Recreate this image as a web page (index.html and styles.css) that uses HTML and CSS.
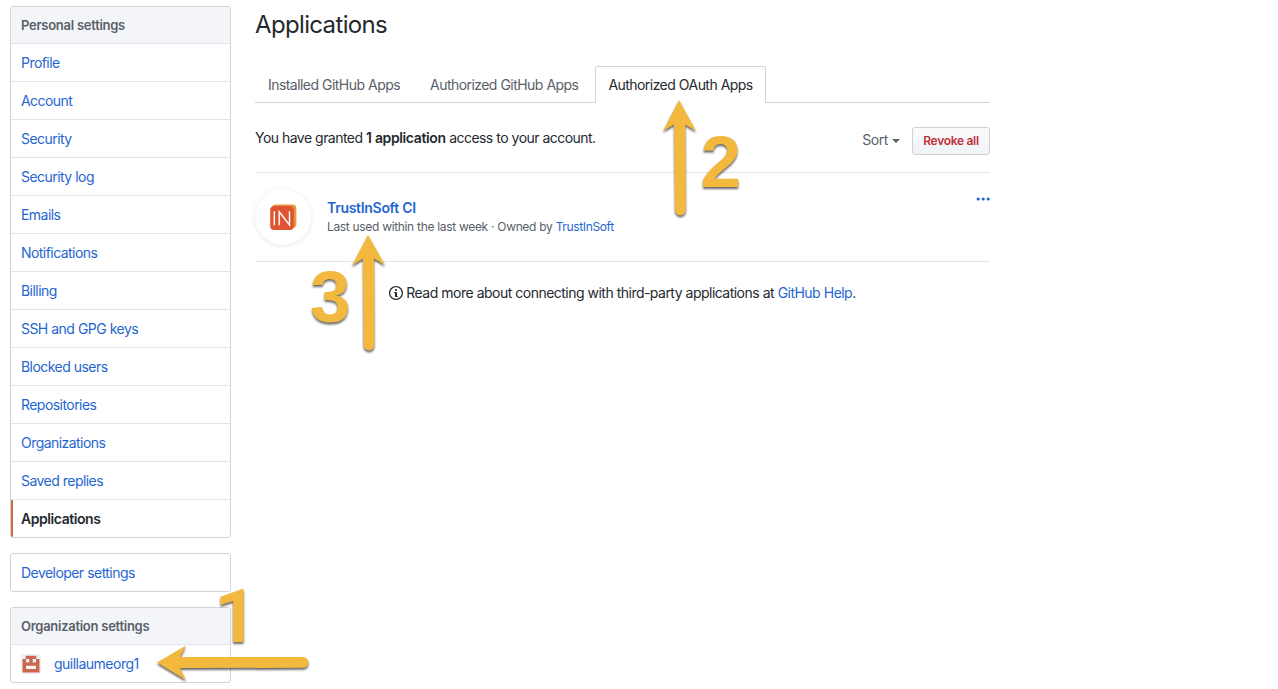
FILE: index.html
```html
<!DOCTYPE html>
<html lang="en">
<head>
<meta charset="utf-8">
<title>Applications</title>
<link rel="stylesheet" href="styles.css">
</head>
<body>
<div class="page">
  <aside class="sidebar">
    <nav class="menu">
      <h2 class="menu-heading">Personal settings</h2>
      <a class="menu-item">Profile</a>
      <a class="menu-item">Account</a>
      <a class="menu-item">Security</a>
      <a class="menu-item">Security log</a>
      <a class="menu-item">Emails</a>
      <a class="menu-item">Notifications</a>
      <a class="menu-item">Billing</a>
      <a class="menu-item">SSH and GPG keys</a>
      <a class="menu-item">Blocked users</a>
      <a class="menu-item">Repositories</a>
      <a class="menu-item">Organizations</a>
      <a class="menu-item">Saved replies</a>
      <a class="menu-item selected">Applications</a>
    </nav>
    <nav class="menu">
      <a class="menu-item">Developer settings</a>
    </nav>
    <nav class="menu">
      <h2 class="menu-heading org-heading">Organization settings</h2>
      <a class="menu-item org">
        <svg class="avatar" width="20" height="20" viewBox="0 0 20 20">
          <rect width="20" height="20" rx="3" fill="#f0f0f0"/>
          <path fill="#cb6751" fill-rule="evenodd" d="M4.700 1.700h10.600v3.200h3.200v13.600h-17V4.900h3.200zM5 5v3.400h3.300V5zM11.700 5v3.400H15V5zM5 11.700V15h10v-3.300z"/>
        </svg>
        <span>guillaumeorg1</span>
      </a>
    </nav>
  </aside>
  <main class="content">
    <h1 class="title">Applications</h1>
    <div class="tabs">
      <a class="tab">Installed GitHub Apps</a>
      <a class="tab">Authorized GitHub Apps</a>
      <a class="tab active">Authorized OAuth Apps</a>
    </div>
    <div class="toolbar">
      <p class="granted">You have granted <strong>1 application</strong> access to your account.</p>
      <div class="actions">
        <span class="sort">Sort<i class="caret"></i></span>
        <button class="revoke">Revoke all</button>
      </div>
    </div>
    <div class="app-row">
      <div class="app-logo">
        <svg width="56" height="56" viewBox="0 0 56 56">
          <rect x="17" y="15.500" width="24.400" height="23.500" rx="4" fill="#e9963c"/>
          <rect x="15.200" y="17" width="23.600" height="24" rx="4" fill="#df5534"/>
          <path d="M19.300 22.300v14M24.200 36.300V22.700l10.300 13.200V22.300" fill="none" stroke="#fff" stroke-width="1.400"/>
        </svg>
      </div>
      <div class="app-info">
        <a class="app-name">TrustInSoft CI</a>
        <p class="app-meta">Last used within the last week · Owned by <a>TrustInSoft</a></p>
      </div>
      <svg class="kebab" width="14" height="4" viewBox="0 0 14 4" fill="#1f66d0">
        <circle cx="2.200" cy="2" r="1.600"/><circle cx="7.200" cy="2" r="1.600"/><circle cx="12.200" cy="2" r="1.600"/>
      </svg>
    </div>
    <p class="help">
      <svg width="14" height="16" viewBox="0 0 14 16"><path fill="#24292e" fill-rule="evenodd" d="M6.300 5.690a.942.942 0 0 1-.28-.7c0-.28.09-.52.28-.7.19-.18.42-.28.7-.28.28 0 .52.09.7.28.18.19.28.42.28.7 0 .28-.09.52-.28.7a1 1 0 0 1-.7.3c-.28 0-.52-.11-.7-.3zM8 7.990c-.02-.25-.11-.48-.31-.69-.2-.19-.42-.3-.69-.31H6c-.27.02-.48.13-.69.31-.2.2-.3.44-.31.69h1v3c.02.27.11.5.31.69.2.2.42.31.69.31h1c.27 0 .48-.11.69-.31.2-.19.3-.42.31-.69H8V7.980v.01zM7 2.300c-3.140 0-5.700 2.540-5.700 5.680 0 3.140 2.560 5.700 5.700 5.700s5.700-2.550 5.700-5.700c0-3.150-2.560-5.690-5.700-5.690v.01zM7 .98c3.860 0 7 3.140 7 7s-3.140 7-7 7-7-3.120-7-7 3.140-7 7-7z"/></svg>
      <span>Read more about connecting with third-party applications at <a>GitHub Help</a>.</span>
    </p>
  </main>
  <svg class="annotations" width="1278" height="689" viewBox="0 0 1278 689">
    <path d="M679 100 L696 131 L685.300 124.500 L685.800 210 A5.400 5.400 0 0 1 675 210 L674 124.500 L663 131 Z"/>
    <path d="M368 235 L385 265 L374 258.500 L374.400 345 A5.400 5.400 0 0 1 363.600 345 L363 258.500 L352 265.500 Z"/>
    <path d="M157 662.500 L186 645.500 L180 657 L303 657 A5.400 5.400 0 0 1 303 667.800 L180 668 L186 680 Z"/>
    <text class="one" x="214.500" y="642">1</text>
    <text x="700.500" y="187">2</text>
    <text x="310" y="322">3</text>
  </svg>
</div>
</body>
</html>
```
FILE: styles.css
```css
* { box-sizing: border-box; }
body {
  margin: 0;
  background: #fff;
  color: #24292e;
  font: 14px/21px Inter, "Liberation Sans", sans-serif;
  letter-spacing: -0.55px;
  word-spacing: 0.2px;
}
h1, h2, p { margin: 0; }
a { color: #1f66d0; }
.page {
  position: relative;
  display: flex;
  gap: 24px;
  height: 689px;
  padding: 6px 0 0 10px;
  overflow: hidden;
}
.sidebar {
  display: flex;
  flex-direction: column;
  gap: 15px;
  width: 221px;
}
.menu {
  border: 1px solid #d1d5da;
  border-radius: 3px;
  overflow: hidden;
}
.menu-heading {
  height: 37px;
  padding: 0 10px;
  border-bottom: 1px solid #e1e4e8;
  background: #f3f5f9;
  color: #586069;
  font-size: 13px;
  font-weight: 600;
  line-height: 37px;
  letter-spacing: -0.28px;
}
.menu-item {
  display: flex;
  align-items: center;
  height: 38px;
  padding: 0 10px;
  border-bottom: 1px solid #e1e4e8;
}
.menu-item:last-child { height: 37px; border-bottom: 0; }
.selected {
  padding-left: 8px;
  border-left: 2px solid #d26b32;
  color: #24292e;
  font-weight: 600;
  letter-spacing: -0.44px;
}
.org { gap: 13px; letter-spacing: -0.51px; }
.content { width: 735px; }
.title {
  height: 60px;
  font-size: 24px;
  font-weight: 400;
  line-height: 38px;
  letter-spacing: -0.65px;
}
.tabs {
  display: flex;
  height: 37px;
  border-bottom: 1px solid #d1d5da;
}
.tab {
  height: 37px;
  padding: 7px 12px;
  border: 1px solid transparent;
  border-bottom: 0;
  color: #586069;
  white-space: nowrap;
}
.tab + .tab { margin-left: 4px; }
.active {
  border-color: #d1d5da;
  border-radius: 3px 3px 0 0;
  background: #fff;
  color: #24292e;
}
.toolbar {
  display: flex;
  justify-content: space-between;
  height: 70px;
  padding-top: 24px;
  border-bottom: 1px solid #e1e4e8;
}
strong { font-weight: 600; letter-spacing: -0.38px; }
.granted { line-height: 22px; }
.actions { display: flex; gap: 12px; height: 28px; align-items: center; }
.sort { display: flex; align-items: center; gap: 4px; height: 24px; margin-bottom: 3px; color: #586069; letter-spacing: -0.4px; }
.caret {
  width: 0;
  height: 0;
  margin-top: 3px;
  border: 4px solid transparent;
  border-top-color: #586069;
  border-bottom: 0;
}
.revoke {
  width: 78px;
  height: 28px;
  padding: 0;
  border: 1px solid #cdd0d4;
  border-radius: 3px;
  background: linear-gradient(#fafbfc, #eff3f6);
  color: #be3039;
  font: 600 12px/18px Inter, sans-serif;
  letter-spacing: -0.3px;
}
.app-row {
  display: flex;
  height: 89px;
  padding-top: 16px;
  border-bottom: 1px solid #e1e4e8;
}
.app-logo {
  width: 56px;
  height: 56px;
  border-radius: 50%;
  box-shadow: 0 1px 5px rgba(0, 0, 0, .1);
}
.app-info { margin: 8px 0 0 16px; }
.app-name { display: block; font-weight: 600; line-height: 22px; letter-spacing: -0.3px; }
.app-meta { color: #586069; font-size: 12px; line-height: 16px; letter-spacing: -0.35px; }
.kebab { margin: 8px 0 0 auto; }
.help {
  display: flex;
  align-items: center;
  justify-content: center;
  gap: 3px;
  margin-top: 20px;
  letter-spacing: -0.53px;
}
.annotations {
  position: absolute;
  left: 0;
  top: 0;
  fill: #f2b93e;
  filter: drop-shadow(0 2px 1px rgba(0, 0, 0, .6));
}
.annotations text { font: bold 73px "Liberation Sans", sans-serif; letter-spacing: 0; }
.annotations .one { font-family: Roboto, sans-serif; font-size: 74px; }
```
